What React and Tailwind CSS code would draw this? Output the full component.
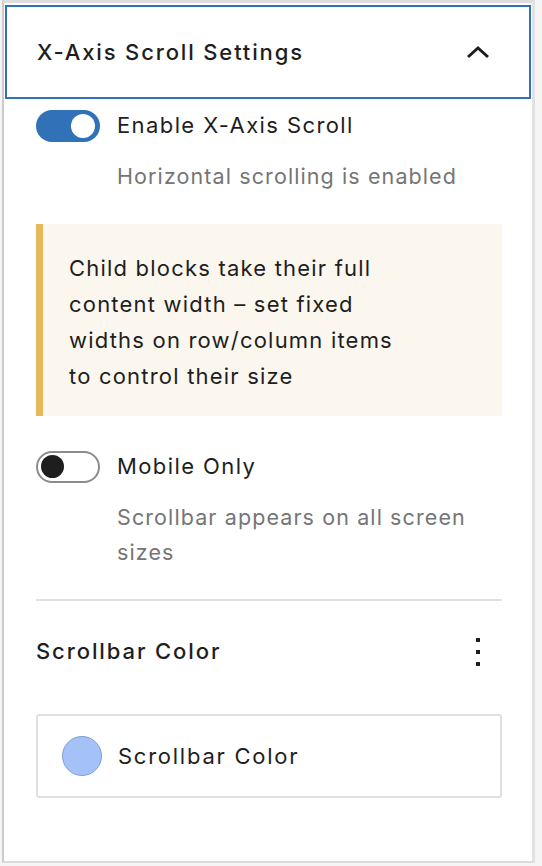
import React from "react";

const font = { fontFamily: "Inter, 'Noto Sans', sans-serif" };

function Toggle({ on }) {
  return on ? (
    <div className="flex h-[32px] w-[64px] shrink-0 items-center justify-end rounded-full bg-[#3171b7] pr-[5px]">
      <div className="h-[24px] w-[24px] rounded-full bg-white" />
    </div>
  ) : (
    <div className="flex h-[32px] w-[64px] shrink-0 items-center rounded-full border-2 border-[#8c8c8c] bg-white pl-[3px]">
      <div className="h-[23px] w-[23px] rounded-full bg-[#1e1e1e]" />
    </div>
  );
}

export default function App() {
  return (
    <div className="h-[866px] w-[542px] overflow-hidden bg-[#f5f5f5]" style={font}>
      <div className="ml-[2px] h-[863px] w-[533px] border-t-[3px] border-b-2 border-l-2 border-r-[3px] border-t-[#dedede] border-b-[#dcdcdc] border-l-[#cbcbcb] border-r-[#e2e2e2] bg-white">
        {/* Panel header */}
        <div className="mx-[1px] mt-[2px] flex h-[94px] items-center justify-between border-2 border-[#3171b7] pl-[30px] pr-[38px]">
          <span className="text-[22px] font-medium tracking-[1.85px] text-[#1e1e1e]">X-Axis Scroll Settings</span>
          <svg width="26" height="16" viewBox="0 0 26 16" fill="none">
            <path d="M3 13 L13 4 L23 13" stroke="#1e1e1e" strokeWidth="3" />
          </svg>
        </div>

        <div className="pl-[32px] pr-[30px]">
          {/* Enable toggle */}
          <div className="mt-[10px] flex items-center gap-[17px]">
            <Toggle on />
            <span className="text-[22px] tracking-[1.4px] text-[#1e1e1e]">Enable X-Axis Scroll</span>
          </div>
          <p className="mt-[17px] pl-[81px] text-[21.5px] leading-[35px] tracking-[1.1px] text-[#757575]">
            Horizontal scrolling is enabled
          </p>

          {/* Notice */}
          <div className="mt-[30px] h-[192px] border-l-[7px] border-[#e8b95a] bg-[#fbf7ef] pl-[26px] pt-[26px]">
            <p className="w-[352px] text-[22px] leading-[36px] tracking-[1.2px] text-[#1e1e1e]">
              Child blocks take their full content width – set fixed widths on row/column items to control their size
            </p>
          </div>

          {/* Mobile only toggle */}
          <div className="mt-[34px] flex items-center gap-[17px]">
            <Toggle />
            <span className="text-[22px] tracking-[1.4px] text-[#1e1e1e]">Mobile Only</span>
          </div>
          <p className="mt-[17px] pl-[81px] text-[21.5px] leading-[35px] tracking-[1.1px] text-[#757575]">
            Scrollbar appears on all screen sizes
          </p>

          <div className="mt-[29px] h-[2px] bg-[#e0e0e0]" />

          {/* Scrollbar color */}
          <div className="mt-[34px] flex items-center justify-between pr-[22px]">
            <span className="text-[22px] font-medium tracking-[1.9px] text-[#1e1e1e]">Scrollbar Color</span>
            <div className="flex flex-col gap-[8px]">
              <div className="h-[4px] w-[4px] bg-[#1e1e1e]" />
              <div className="h-[4px] w-[4px] bg-[#1e1e1e]" />
              <div className="h-[4px] w-[4px] bg-[#1e1e1e]" />
            </div>
          </div>

          <div className="mt-[46px] flex h-[84px] items-center gap-[16px] rounded-[3px] border-2 border-[#e0e0e0] pl-[24px]">
            <div className="h-[40px] w-[40px] rounded-full border border-[#7c9fd6] bg-[#a4c2f7]" />
            <span className="text-[22px] tracking-[1.75px] text-[#1e1e1e]">Scrollbar Color</span>
          </div>
        </div>
      </div>
    </div>
  );
}
